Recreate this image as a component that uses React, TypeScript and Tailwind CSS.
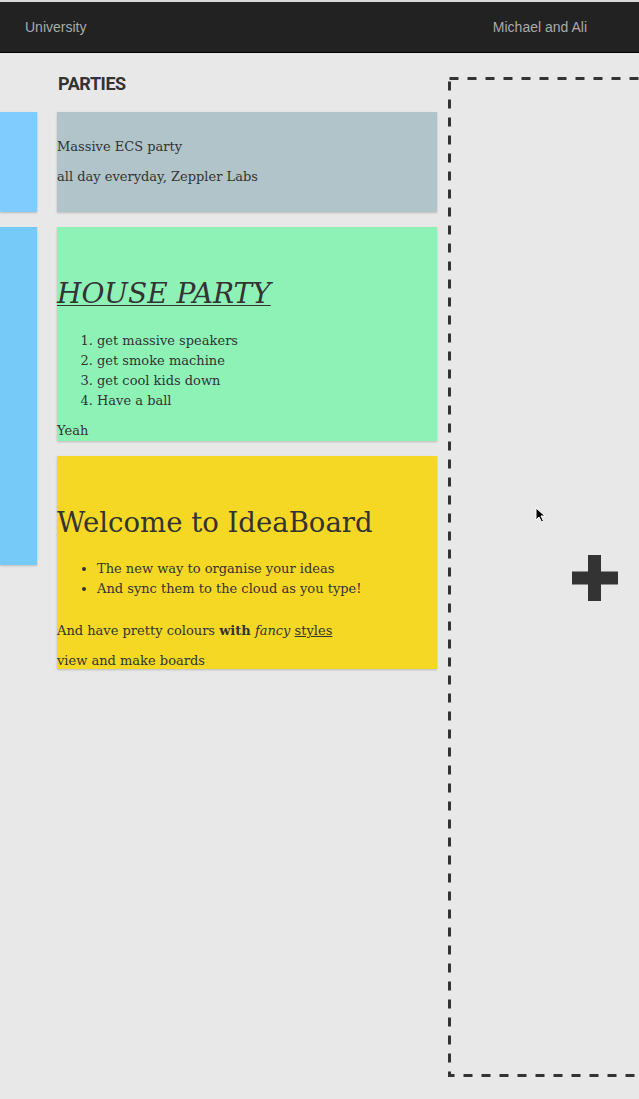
const slab = "font-['DejaVu_Serif',serif]";

const Card = ({ color, children }: { color: string; children: React.ReactNode }) => (
  <div className={`${color} ${slab} text-[13px] leading-5 text-[#333] shadow-[0_1px_2px_rgba(0,0,0,0.2)]`}>{children}</div>
);

const App = () => {
  return (
    <div className="flex h-[1099px] w-[639px] flex-col overflow-hidden bg-[#e8e8e8]">
      <div className="h-[2px] bg-[#d8d8d8]"></div>
      <div className="flex h-[51px] items-center justify-between border-b border-black bg-[#222] pl-[25px] pr-[52px] font-['Liberation_Sans',sans-serif] text-[14px] text-[#aaa]">
        <span>University</span>
        <span>Michael and Ali</span>
      </div>
      <div className="flex flex-1 flex-row">
        <div className="flex w-[37px] shrink-0 flex-col gap-[15px] pt-[59px]">
          <div className="h-[100px] bg-[#80ccff] shadow-[0_1px_2px_rgba(0,0,0,0.2)]"></div>
          <div className="h-[338px] bg-[#76caf7] shadow-[0_1px_2px_rgba(0,0,0,0.2)]"></div>
        </div>
        <div className="ml-[20px] flex w-[380px] shrink-0 flex-col">
          <h2 className="pt-[21px] pl-px font-['Roboto',sans-serif] text-[18px] leading-[20px] font-bold tracking-tight text-[#333]">
            PARTIES
          </h2>
          <div className="mt-[18px] flex flex-col gap-[15px]">
            <Card color="bg-[#b0c4c9]">
              <div className="flex h-[100px] flex-col justify-start pt-[25px]">
                <p>Massive ECS party</p>
                <p className="mt-[10px]">all day everyday, Zeppler Labs</p>
              </div>
            </Card>
            <Card color="bg-[#8ef2b7]">
              <div className="flex h-[214px] flex-col pt-[49px]">
                <h1 className="text-[28px] leading-9 italic underline decoration-1 underline-offset-2">HOUSE PARTY</h1>
                <ol className="mt-[19px] list-decimal pl-[40px]">
                  <li>get massive speakers</li>
                  <li>get smoke machine</li>
                  <li>get cool kids down</li>
                  <li>Have a ball</li>
                </ol>
                <p className="mt-[10px]">Yeah</p>
              </div>
            </Card>
            <Card color="bg-[#f5d823]">
              <div className="flex h-[213px] flex-col pt-[48px]">
                <h1 className="text-[27.5px] leading-9">Welcome to IdeaBoard</h1>
                <ul className="mt-[19px] list-disc pl-[40px]">
                  <li>The new way to organise your ideas</li>
                  <li>And sync them to the cloud as you type!</li>
                </ul>
                <p className="mt-[22px]">
                  And have pretty colours <b>with</b> <i>fancy</i> <u>styles</u>
                </p>
                <p className="mt-[10px]">view and make boards</p>
              </div>
            </Card>
          </div>
        </div>
        <div className="ml-[11px] flex w-[380px] shrink-0 flex-col pt-[24px]">
          <div className="relative flex h-[1000px] items-center pl-[124px]">
            <svg width="380" height="1000" className="absolute inset-0">
              <rect x="1.5" y="1.5" width="377" height="997" fill="none" stroke="#333" strokeWidth="3" strokeDasharray="9 9" />
            </svg>
            <svg width="46" height="46" viewBox="0 0 46 46" className="relative mt-[2px]">
              <path d="M16 0h13v16.5h17v13H29V46H16V29.5H0v-13h16z" fill="#333" />
            </svg>
            <svg width="12" height="16" viewBox="0 0 12 16" className="absolute left-[87px] top-[430px]">
              <path d="M1 1v12l3-3 2.5 5 2-1-2.5-5h4z" fill="#000" stroke="#fff" strokeWidth="1" />
            </svg>
          </div>
        </div>
      </div>
    </div>
  );
};

export default App;
